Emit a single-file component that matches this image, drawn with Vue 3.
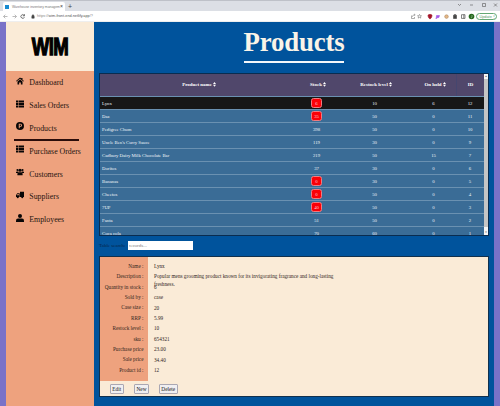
<script setup>
const nav = [
  { name: 'Dashboard', icon: 'home' },
  { name: 'Sales Orders', icon: 'list' },
  { name: 'Products', icon: 'product', active: true },
  { name: 'Purchase Orders', icon: 'list' },
  { name: 'Customers', icon: 'group' },
  { name: 'Suppliers', icon: 'truck' },
  { name: 'Employees', icon: 'person' }
]
const columns = ['Product name', 'Stock', 'Restock level', 'On hold', 'ID']
const rows = [
  ['Lynx', 6, 10, 6, 12],
  ['Daz', 35, 50, 0, 11],
  ['Pedigree Chum', 398, 50, 0, 10],
  ["Uncle Ben's Curry Sauce", 119, 30, 0, 9],
  ['Cadbury Dairy Milk Chocolate Bar', 219, 50, 15, 7],
  ['Doritos', 37, 30, 0, 6],
  ['Bananas', 0, 30, 0, 5],
  ['Cheetos', 0, 50, 0, 4],
  ['7UP', 40, 50, 0, 3],
  ['Fanta', 51, 50, 0, 2],
  ['Coca cola', 70, 60, 0, 1]
]
const details = [
  ['Name :', 'Lynx'],
  ['Description :', 'Popular mens grooming product known for its invigorating fragrance and long-lasting freshness.'],
  ['Quantity in stock :', '6'],
  ['Sold by :', 'case'],
  ['Case size :', '20'],
  ['RRP :', '5.99'],
  ['Restock level :', '10'],
  ['sku :', '654321'],
  ['Purchase price', '23.00'],
  ['Sale price', '34.40'],
  ['Product id :', '12']
]
</script>

<template>
  <div class="window">
    <div class="tabs">
      <div class="tab">
        <i class="favicon"></i><span class="tab-title">Warehouse inventory managem</span><b>×</b>
      </div>
      <span class="plus">+</span>
      <svg class="controls" viewBox="0 0 42 8" fill="none" stroke="#555" stroke-width=".6">
        <path d="M2 3l1.500 1.500L5 3M14 4h3M26.500 2.500h3v3h-3zM38 2.500l3 3m0-3l-3 3" />
      </svg>
    </div>
    <div class="toolbar">
      <svg class="navicons" viewBox="0 0 36 11" fill="none" stroke-width=".8">
        <path d="M7.500 5.500h-4M5.300 3.700L3.500 5.500l1.800 1.800M12.500 5.500h4M14.700 3.700l1.800 1.800-1.800 1.800" stroke="#aaa" />
        <path d="M24.200 4.500a1.800 1.800 0 1 0 .2 1.600M24.500 3.200v1.600h-1.600" stroke="#555" />
        <path d="M31.800 5.300h2.400v1.900h-2.400zM32.200 5.300V4.500a.8.8 0 0 1 1.600 0v.8" stroke="#444" stroke-width=".5" fill="#444" />
      </svg>
      <span class="url">https://<em>wim-front-end.netlify.app</em>/?</span>
      <svg class="exts" viewBox="0 0 66 11" fill="none" stroke="#777" stroke-width=".6">
        <path d="M1.500 4.500v3h3V6M2.500 5.800c0-1.500 1-2 2.500-2M4.200 3l1 .8-1 .8" />
        <path d="M9.500 3.400l.6 1.300 1.400.1-1.100.9.4 1.400-1.300-.7-1.300.7.400-1.400-1.100-.9 1.400-.1z" />
        <path d="M18 4l2-.7 2 .7c0 2-.7 3.200-2 4-1.300-.8-2-2-2-4z" fill="#a4152a" stroke="#a4152a" />
        <path d="M26.500 4.500h3l-.6 2-2.400.4-.4 1.100z" fill="#a35be8" stroke="#a35be8" />
        <circle cx="36.500" cy="5.600" r="1.800" fill="#e3b886" stroke="#b28963" />
        <path d="M43.500 4.200h1V3.500h1v.7h1v3.300h-3z" fill="#444" stroke="#444" />
        <path d="M51.500 3.700h3.500v3.700h-3.500zM53.800 3.700v3.700" stroke="#333" />
        <circle cx="61.500" cy="5.500" r="2.800" fill="#25691d" stroke="none" />
        <path d="M62 4v2.300q-.7.800-1.200 0" stroke="#fff" stroke-width=".4" />
      </svg>
      <span class="update">Update <i>⋮</i></span>
    </div>
    <div class="page">
      <aside>
        <div class="logo"><span>WIM</span></div>
        <nav>
          <div v-for="n in nav" :key="n.name" class="item" :class="{ active: n.active }">
            <svg viewBox="0 0 16 16">
              <path v-if="n.icon === 'home'" d="M0 8L8 1l2.500 2.200V2H13v3.500L16 8l-1 1.200L8 3.300 1 9.200zM3 9l5-4.200L13 9v6H9.700v-4H6.300v4H3z" />
              <path v-else-if="n.icon === 'list'" d="M0 1h4v4.200H0zM5 1h11v4.200H5zM0 6h4v4.200H0zM5 6h11v4.200H5zM0 11h4v4.200H0zM5 11h11v4.200H5z" />
              <path v-else-if="n.icon === 'product'" fill-rule="evenodd" d="M8 0a8 8 0 1 1 0 16A8 8 0 0 1 8 0zM5.500 3.500v9h2v-3H9a3 3 0 0 0 0-6zm2 1.700h1.300a1.300 1.300 0 0 1 0 2.600H7.500z" />
              <g v-else-if="n.icon === 'group'">
                <circle cx="3" cy="4" r="2.200" /><circle cx="13" cy="4" r="2.200" /><circle cx="8" cy="4.700" r="3" />
                <path d="M0 10V8.500Q0 7 2 7h2.500L5 8 3.500 10zM16 10V8.500Q16 7 14 7h-2.500L11 8l1.500 2zM2.800 14.500v-3q0-3 3-3h4.400q3 0 3 3v3z" />
              </g>
              <g v-else-if="n.icon === 'truck'">
                <path d="M16 1.500v10.500H8V1.500zM7.300 4.500v7.500H0V8.300l2.500-3.800zM5.500 6H3.300L1.800 8.300h3.700z" />
                <circle cx="3.500" cy="12.500" r="2" /><circle cx="12.500" cy="12.500" r="2" />
              </g>
              <g v-else><circle cx="8" cy="4" r="4" /><path d="M0 16v-2.500q0-4.500 4-4.500h8q4 0 4 4.500V16z" /></g>
            </svg>
            <span>{{ n.name }}</span>
          </div>
        </nav>
      </aside>
      <main>
        <h1>Products</h1>
        <div class="table-box">
          <div class="table">
            <div class="row head">
              <div v-for="c in columns" :key="c">
                {{ c }}<svg v-if="c !== 'ID'" viewBox="0 0 5 8"><path d="M0 3.500L2.500 0 5 3.500zM0 4.700h5L2.500 8z" /></svg>
              </div>
            </div>
            <div v-for="(r, i) in rows" :key="r[4]" class="row" :class="{ selected: i === 0 }">
              <div v-for="(v, j) in r" :key="j">
                <span :class="{ low: j === 1 && r[1] < r[2] }">{{ v }}</span>
              </div>
            </div>
          </div>
          <div class="scroll"><span>▴</span><span>▾</span></div>
        </div>
        <div class="search"><label>Table search:</label><input placeholder="records..." /></div>
        <section>
          <div class="fields">
            <div v-for="d in details" :key="d[0]" class="field">
              <label>{{ d[0] }}</label><span>{{ d[1] }}</span>
            </div>
          </div>
          <div class="actions"><button class="edit">Edit</button><button class="new">New</button><button class="delete">Delete</button></div>
        </section>
      </main>
    </div>
  </div>
</template>

<style>
body { margin: 0; overflow: hidden; }
</style>
<style scoped>
* { box-sizing: border-box; }
.window { width: 500px; height: 406px; display: flex; flex-direction: column; font-family: "Liberation Serif", serif; overflow: hidden; }
.tabs { height: 11px; flex: none; background: #dcdfe5; display: flex; align-items: center; font: 4.200px "Liberation Sans", sans-serif; border-top: 1px solid #bec1c8; }
.tab { width: 62px; height: 9px; margin: 1px 0 0 3px; border-radius: 2px 2px 0 0; background: #fff; display: flex; align-items: center; padding: 0 2px; color: #777; white-space: nowrap; }
.favicon { width: 4px; height: 4px; background: #188bd0; margin-right: 3px; flex: none; }
.tab-title { width: 47px; font-size: 3.400px; flex: none; }
.tab b { font-size: 5px; font-weight: normal; line-height: 5px; margin-left: 1px; color: #333; }
.plus { font-size: 7px; margin-left: 3px; color: #444; }
.controls { width: 42px; height: 8px; margin-left: auto; margin-right: 2px; transform: translateY(-1px); }
.toolbar { height: 11px; flex: none; background: #fff; display: flex; align-items: center; font: 3.800px "Liberation Sans", sans-serif; color: #888; border-bottom: 1px solid #eee; }
.navicons { width: 36px; height: 11px; margin-right: 1px; }
.url em { font-style: normal; color: #555; }
.exts { width: 66px; height: 11px; margin-left: auto; margin-right: 0; }
.update { width: 21px; height: 7px; margin-right: 3px; border: .7px solid #63a875; border-radius: 4px; color: #52966a; font-size: 3.800px; line-height: 6px; display: flex; justify-content: space-between; padding: 0 1.500px 0 2.500px; }
.update i { font-style: normal; }
.page { flex: 1; display: flex; padding: 0 6px; background: #7972c8; min-height: 0; }
aside { width: 88px; background: #eea27e; flex: none; }
.logo { height: 49px; background: #faebd7; display: flex; align-items: center; justify-content: center; font: bold 23.500px "Liberation Sans", sans-serif; color: #000; }
.logo span { transform: translateY(.7px) scaleX(.79); letter-spacing: -.8px; -webkit-text-stroke: 1.300px #000; }
nav { padding: 0 8px; }
.item { height: 22.800px; display: flex; align-items: center; padding: 1px 0 0 2px; font-size: 7.850px; color: #24130f; white-space: nowrap; position: relative; }
.item svg { width: 8px; height: 8px; margin: -4px 5.300px 0 0; fill: #090606; }
.item.active::after { content: ""; position: absolute; left: 0; bottom: -1.200px; width: 65px; height: 1.500px; background: #2b0d0a; }
main { flex: 1; min-width: 0; background: #00539c; padding: 0 5px; }
h1 { width: 100px; margin: 3px auto 10px; height: 37.500px; line-height: 34px; font-size: 26.800px; text-align: center; color: #faf4e8; border-bottom: 2px solid #f4f7fa; white-space: nowrap; display: flex; justify-content: center; letter-spacing: -.15px; }
.table-box { height: 163px; border: 1px solid #092c50; display: flex; overflow: hidden; }
.table { width: 384px; flex: none; font-size: 4.750px; color: #f0f5f9; }
.row { display: grid; grid-template-columns: 198px 40px 76px 42px 28px; height: 13px; background: #3a6c96; border-top: 1px solid #6a91b1; }
.row > div { display: flex; align-items: center; justify-content: center; padding-right: 3px; white-space: nowrap; }
.row > div:first-child { justify-content: flex-start; padding-left: 2px; }
.row > div:last-child { padding-right: 0; }
.row.head { height: 22.500px; background: #50476b; border: 0; font-weight: bold; font-size: 4.950px; color: #fff; }
.row.head > div, .row.head > div:first-child { padding: 0; justify-content: center; }
.row.head > div:last-child { border-left: 1px solid #45466f; }
.row.head svg { width: 3px; height: 4.800px; margin-left: 1px; fill: #fff; }
.row.selected { background: #171717; }
.low { width: 10.500px; height: 10.500px; margin: -1px 0; line-height: 9.500px; text-align: center; border: .7px solid #f07c80; border-radius: 2.500px; background: #fb0007; color: #ffd0d0; }
.scroll { width: 4px; height: 161px; background: #c5c5c5; display: flex; flex-direction: column; justify-content: space-between; font: 3px "DejaVu Sans", sans-serif; color: #555; text-align: center; }
.scroll span { height: 5px; line-height: 5px; background: #f6f6f6; }
.scroll span:last-child { height: 8px; line-height: 11px; }
.search { height: 20px; display: flex; align-items: center; font-size: 5px; color: #06264a; }
.search label { width: 28.500px; white-space: nowrap; }
.search input { width: 65.500px; height: 9.500px; border: 0; padding: 0 1px; background: #fff; font: 5px "Liberation Serif", serif; }
.search input::placeholder { color: #808080; }
section { height: 141px; border: 1px solid #10304d; background: #faebd7; font-size: 5.220px; color: #30251d; }
.fields { height: 124px; padding-top: 4.400px; background: linear-gradient(90deg, #eea27e 48.500px, transparent 48.500px); }
.field { height: 10.400px; display: flex; line-height: 10.400px; }
.field label { width: 43.500px; margin-right: 10.500px; text-align: right; white-space: nowrap; flex: none; }
.field span { width: 182px; line-height: 8px; padding-top: 1.200px; }
.actions { display: flex; padding: 3px 0 0 10px; }
button { height: 10px; padding: 0; border: .7px solid #aaa7b2; border-radius: 1px; background: #f0eff1; font: 5.300px "Liberation Serif", serif; color: #111; }
.edit { width: 13.500px; margin-right: 10.500px; }
.new { width: 15px; margin-right: 10px; }
.delete { width: 18.500px; }
</style>
